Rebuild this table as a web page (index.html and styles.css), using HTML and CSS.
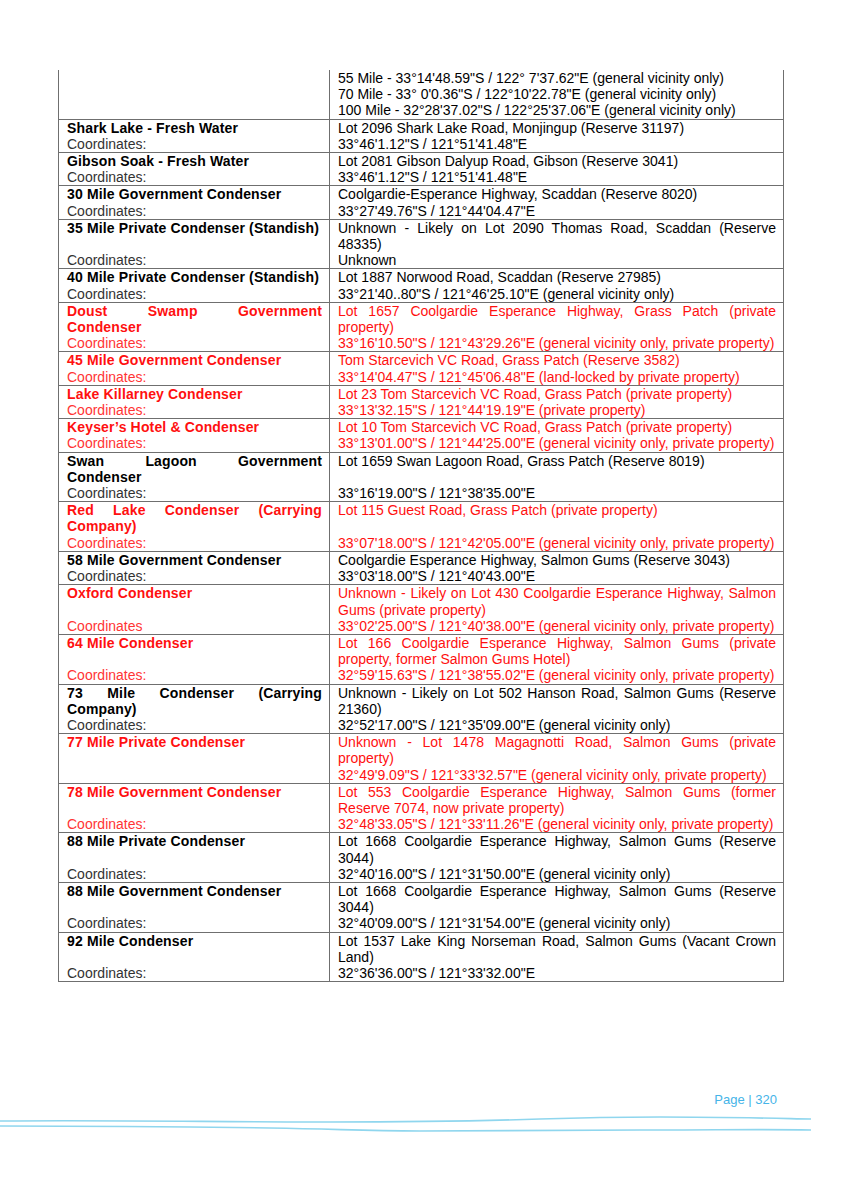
FILE: index.html
```html
<!DOCTYPE html>
<html lang="en">
<head>
<meta charset="utf-8">
<title>Page 320</title>
<link rel="stylesheet" href="styles.css">
</head>
<body>
<main class="sheet">
<table class="sites">
<colgroup><col class="c-name"><col class="c-loc"></colgroup>
<tbody>
<tr class="first"><td></td><td class="loc">55 Mile - 33°14'48.59"S / 122° 7'37.62"E (general vicinity only)<br>70 Mile - 33° 0'0.36"S / 122°10'22.78"E (general vicinity only)<br>100 Mile - 32°28'37.02"S / 122°25'37.06"E (general vicinity only)</td></tr>

<tr class="a"><td class="name">Shark Lake - Fresh Water</td><td class="loc">Lot 2096 Shark Lake Road, Monjingup (Reserve 31197)</td></tr>
<tr class="b"><td class="name">Coordinates:</td><td class="loc">33°46'1.12"S / 121°51'41.48"E</td></tr>

<tr class="a"><td class="name">Gibson Soak - Fresh Water</td><td class="loc">Lot 2081 Gibson Dalyup Road, Gibson (Reserve 3041)</td></tr>
<tr class="b"><td class="name">Coordinates:</td><td class="loc">33°46'1.12"S / 121°51'41.48"E</td></tr>

<tr class="a"><td class="name">30 Mile Government Condenser</td><td class="loc">Coolgardie-Esperance Highway, Scaddan (Reserve 8020)</td></tr>
<tr class="b"><td class="name">Coordinates:</td><td class="loc">33°27'49.76"S / 121°44'04.47"E</td></tr>

<tr class="a"><td class="name">35 Mile Private Condenser (Standish)</td><td class="loc">Unknown - Likely on Lot 2090 Thomas Road, Scaddan (Reserve 48335)</td></tr>
<tr class="b"><td class="name">Coordinates:</td><td class="loc">Unknown</td></tr>

<tr class="a"><td class="name">40 Mile Private Condenser (Standish)</td><td class="loc">Lot 1887 Norwood Road, Scaddan (Reserve 27985)</td></tr>
<tr class="b"><td class="name">Coordinates:</td><td class="loc">33°21'40..80"S / 121°46'25.10"E (general vicinity only)</td></tr>

<tr class="a red"><td class="name">Doust Swamp Government Condenser</td><td class="loc">Lot 1657 Coolgardie Esperance Highway, Grass Patch (private property)</td></tr>
<tr class="b red"><td class="name">Coordinates:</td><td class="loc">33°16'10.50"S / 121°43'29.26"E (general vicinity only, private property)</td></tr>

<tr class="a red"><td class="name">45 Mile Government Condenser</td><td class="loc">Tom Starcevich VC Road, Grass Patch (Reserve 3582)</td></tr>
<tr class="b red"><td class="name">Coordinates:</td><td class="loc">33°14'04.47"S / 121°45'06.48"E (land-locked by private property)</td></tr>

<tr class="a red"><td class="name">Lake Killarney Condenser</td><td class="loc">Lot 23 Tom Starcevich VC Road, Grass Patch (private property)</td></tr>
<tr class="b red"><td class="name">Coordinates:</td><td class="loc">33°13'32.15"S / 121°44'19.19"E (private property)</td></tr>

<tr class="a red"><td class="name">Keyser’s Hotel &amp; Condenser</td><td class="loc">Lot 10 Tom Starcevich VC Road, Grass Patch (private property)</td></tr>
<tr class="b red"><td class="name">Coordinates:</td><td class="loc">33°13'01.00"S / 121°44'25.00"E (general vicinity only, private property)</td></tr>

<tr class="a"><td class="name">Swan Lagoon Government Condenser</td><td class="loc">Lot 1659 Swan Lagoon Road, Grass Patch (Reserve 8019)</td></tr>
<tr class="b"><td class="name">Coordinates:</td><td class="loc">33°16'19.00"S / 121°38'35.00"E</td></tr>

<tr class="a red"><td class="name">Red Lake Condenser (Carrying Company)</td><td class="loc">Lot 115 Guest Road, Grass Patch (private property)</td></tr>
<tr class="b red"><td class="name">Coordinates:</td><td class="loc">33°07'18.00"S / 121°42'05.00"E (general vicinity only, private property)</td></tr>

<tr class="a"><td class="name">58 Mile Government Condenser</td><td class="loc">Coolgardie Esperance Highway, Salmon Gums (Reserve 3043)</td></tr>
<tr class="b"><td class="name">Coordinates:</td><td class="loc">33°03'18.00"S / 121°40'43.00"E</td></tr>

<tr class="a red"><td class="name">Oxford Condenser</td><td class="loc">Unknown - Likely on Lot 430 Coolgardie Esperance Highway, Salmon Gums (private property)</td></tr>
<tr class="b red"><td class="name">Coordinates</td><td class="loc">33°02'25.00"S / 121°40'38.00"E (general vicinity only, private property)</td></tr>

<tr class="a red"><td class="name">64 Mile Condenser</td><td class="loc">Lot 166 Coolgardie Esperance Highway, Salmon Gums (private property, former Salmon Gums Hotel)</td></tr>
<tr class="b red"><td class="name">Coordinates:</td><td class="loc">32°59'15.63"S / 121°38'55.02"E (general vicinity only, private property)</td></tr>

<tr class="a"><td class="name">73 Mile Condenser (Carrying Company)</td><td class="loc">Unknown - Likely on Lot 502 Hanson Road, Salmon Gums (Reserve 21360)</td></tr>
<tr class="b"><td class="name">Coordinates:</td><td class="loc">32°52'17.00"S / 121°35'09.00"E (general vicinity only)</td></tr>

<tr class="a red"><td class="name">77 Mile Private Condenser</td><td class="loc">Unknown - Lot 1478 Magagnotti Road, Salmon Gums (private property)</td></tr>
<tr class="b red"><td class="name"></td><td class="loc">32°49'9.09"S / 121°33'32.57"E (general vicinity only, private property)</td></tr>

<tr class="a red"><td class="name">78 Mile Government Condenser</td><td class="loc">Lot 553 Coolgardie Esperance Highway, Salmon Gums (former Reserve 7074, now private property)</td></tr>
<tr class="b red"><td class="name">Coordinates:</td><td class="loc">32°48'33.05"S / 121°33'11.26"E (general vicinity only, private property)</td></tr>

<tr class="a"><td class="name">88 Mile Private Condenser</td><td class="loc">Lot 1668 Coolgardie Esperance Highway, Salmon Gums (Reserve 3044)</td></tr>
<tr class="b"><td class="name">Coordinates:</td><td class="loc">32°40'16.00"S / 121°31'50.00"E (general vicinity only)</td></tr>

<tr class="a"><td class="name">88 Mile Government Condenser</td><td class="loc">Lot 1668 Coolgardie Esperance Highway, Salmon Gums (Reserve 3044)</td></tr>
<tr class="b"><td class="name">Coordinates:</td><td class="loc">32°40'09.00"S / 121°31'54.00"E (general vicinity only)</td></tr>

<tr class="a last"><td class="name">92 Mile Condenser</td><td class="loc">Lot 1537 Lake King Norseman Road, Salmon Gums (Vacant Crown Land)</td></tr>
<tr class="b last"><td class="name">Coordinates:</td><td class="loc">32°36'36.00"S / 121°33'32.00"E</td></tr>
</tbody>
</table>
</main>
<footer class="page-foot">
<p class="page-num">Page | 320</p>
<svg class="waves" width="844" height="24" viewBox="0 0 844 24" aria-hidden="true">
<path d="M0 9 C 120 8, 220 10, 330 10 S 480 9, 540 7 S 600 5, 660 5 S 760 6, 811 7" />
<path d="M0 14 C 120 14, 200 15, 270 16 S 360 19, 420 19 S 560 18, 640 18 S 760 17, 811 18" />
</svg>
</footer>
</body>
</html>
```

FILE: styles.css
```css
html, body {
  margin: 0;
  padding: 0;
  background: #ffffff;
}

body {
  width: 844px;
  height: 1193px;
  overflow: hidden;
  font-family: "Liberation Sans", Arial, sans-serif;
  color: #000000;
}

.sheet {
  padding: 70px 0 0 58px;
}

.sites {
  border-collapse: collapse;
  table-layout: fixed;
  width: 725px;
  font-size: 14px;
  line-height: 16.2px;
}

.c-name { width: 271px; }
.c-loc { width: 454px; }

.sites td {
  padding: 0 7px 0 8px;
  vertical-align: top;
  text-align: justify;
  border-left: 1px solid #6f6f6f;
  border-right: 1px solid #6f6f6f;
}

.sites tr.a td {
  border-top: 1px solid #6f6f6f;
}

.sites tr.b.last td {
  border-bottom: 1px solid #6f6f6f;
}

.sites tr.a td.name {
  font-weight: bold;
  letter-spacing: 0.15px;
}

.sites tr.b td.name {
  font-weight: normal;
  color: #333333;
}

.sites tr.red td,
.sites tr.red td.name {
  color: #ff1010;
}

.sites tr.b.red td.name {
  color: #ff3535;
}

.page-foot {
  margin-top: 110px;
}

.page-num {
  margin: 0;
  width: 777px;
  text-align: right;
  font-family: "Liberation Sans", Arial, sans-serif;
  font-size: 13px;
  line-height: 15px;
  color: #45b4e8;
}

.waves {
  display: block;
  margin-top: 5px;
}

.waves path {
  fill: none;
  stroke: #8fd6ee;
  stroke-width: 1.6;
}
```
